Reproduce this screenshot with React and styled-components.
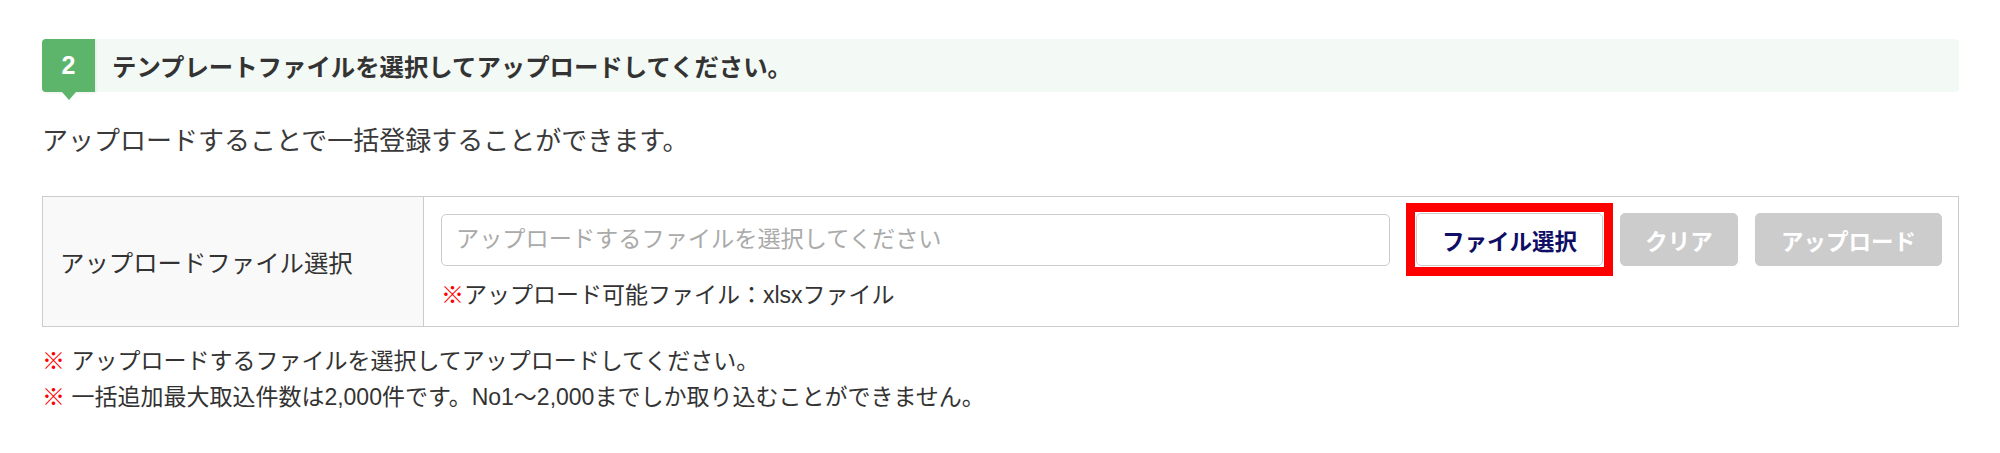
import React from "react";
import styled, { createGlobalStyle } from "styled-components";

const GlobalStyle = createGlobalStyle`
  body {
    margin: 0;
    background: #fff;
    font-family: "Liberation Sans", "Noto Sans CJK JP", sans-serif;
    color: #333;
  }
`;

const Page = styled.div`
  padding: 39px 41px 0 42px;
`;

const StepBar = styled.div`
  display: flex;
  align-items: center;
  height: 53px;
  background: #f3f9f4;
  border-radius: 4px;
`;

const StepBadge = styled.div`
  position: relative;
  display: flex;
  align-items: center;
  justify-content: center;
  width: 53px;
  height: 100%;
  background: #5cb56a;
  border-radius: 4px 0 0 4px;
  color: #fff;
  font-size: 25px;
  font-weight: bold;
  box-shadow: 1px 1px 3px rgba(0, 0, 0, 0.08);
  &::after {
    content: "";
    position: absolute;
    top: 100%;
    left: 50%;
    margin-left: -7px;
    border-left: 7px solid transparent;
    border-right: 7px solid transparent;
    border-top: 8px solid #5cb56a;
  }
`;

const StepTitle = styled.div`
  margin-left: 17px;
  font-size: 24.4px;
  font-weight: bold;
  color: #333;
`;

const Lead = styled.p`
  margin: 31px 0 0;
  font-size: 26px;
  line-height: 36px;
  color: #3a3a3a;
`;

const Table = styled.div`
  display: grid;
  grid-template-columns: 381px 1fr;
  margin-top: 37px;
  border: 1px solid #cccccc;
`;

const LabelCell = styled.div`
  display: flex;
  align-items: center;
  padding-left: 17px;
  background: #f9f9f9;
  border-right: 1px solid #cccccc;
  font-size: 24.4px;
  color: #333;
`;

const ValueCell = styled.div`
  display: flex;
  flex-direction: column;
  padding: 16px 16px 16px 17px;
`;

const Controls = styled.div`
  display: flex;
  align-items: center;
  height: 53px;
`;

const FileInput = styled.input`
  flex: 1;
  min-width: 0;
  height: 52px;
  box-sizing: border-box;
  padding: 0 14px;
  border: 1px solid #cccccc;
  border-radius: 5px;
  font-family: inherit;
  font-size: 23.2px;
  color: #333;
  &::placeholder {
    color: #aaaaaa;
  }
`;

const Highlight = styled.div`
  display: flex;
  margin: -10px 0 -10px 16px;
  padding: 1px;
  border: 9px solid #ff0000;
`;

const Button = styled.button`
  height: 53px;
  width: ${(p) => p.$width}px;
  margin-left: ${(p) => p.$gap}px;
  box-sizing: border-box;
  border-radius: 5px;
  font-family: inherit;
  font-size: 22.5px;
  font-weight: bold;
  cursor: pointer;
  border: 1px solid #cccccc;
  background: ${(p) => (p.$disabled ? "#cccccc" : "#ffffff")};
  color: ${(p) => (p.$disabled ? "#ffffff" : "#0e0e66")};
`;

const Hint = styled.div`
  margin-top: 14px;
  font-size: 23px;
  line-height: 30px;
  color: #333;
`;

const Mark = styled.span`
  color: #ff0000;
`;

const Notes = styled.div`
  margin-top: 16px;
`;

const Note = styled.div`
  font-size: 23px;
  line-height: 36px;
  color: #333;
`;

export default function App() {
  return (
    <Page>
      <GlobalStyle />
      <StepBar>
        <StepBadge>2</StepBadge>
        <StepTitle>テンプレートファイルを選択してアップロードしてください。</StepTitle>
      </StepBar>
      <Lead>アップロードすることで一括登録することができます。</Lead>
      <Table>
        <LabelCell>アップロードファイル選択</LabelCell>
        <ValueCell>
          <Controls>
            <FileInput placeholder="アップロードするファイルを選択してください" readOnly />
            <Highlight>
              <Button $width={187} $gap={0}>ファイル選択</Button>
            </Highlight>
            <Button $width={118} $gap={7} $disabled>クリア</Button>
            <Button $width={187} $gap={17} $disabled>アップロード</Button>
          </Controls>
          <Hint>
            <Mark>※</Mark>アップロード可能ファイル：xlsxファイル
          </Hint>
        </ValueCell>
      </Table>
      <Notes>
        <Note>
          <Mark>※</Mark> アップロードするファイルを選択してアップロードしてください。
        </Note>
        <Note>
          <Mark>※</Mark> 一括追加最大取込件数は2,000件です。No1～2,000までしか取り込むことができません。
        </Note>
      </Notes>
    </Page>
  );
}
